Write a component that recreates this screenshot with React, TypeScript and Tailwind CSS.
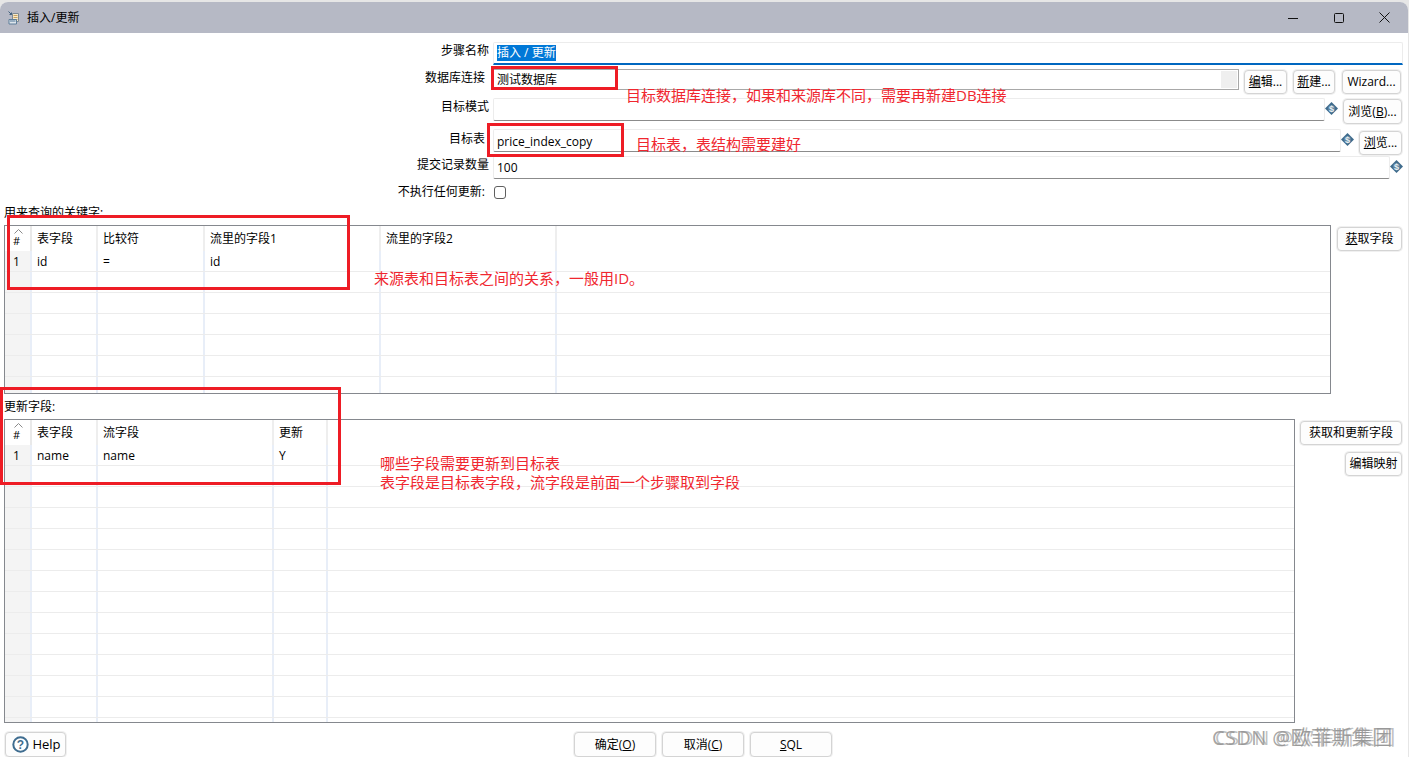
import type { ReactNode } from "react";

const cjk = "font-['Open_Sans','Noto_Sans_CJK_SC',sans-serif]";

function Btn({ children, className = "" }: { children: ReactNode; className?: string }) {
  return (
    <button className={`flex items-center justify-center rounded-[4px] border border-[#d4d4d4] bg-[#fdfdfd] text-[12px] leading-none text-black shadow-[0_0_0_1px_#f0f0f0] ${className}`}>
      {children}
    </button>
  );
}

function VarIcon() {
  return (
    <svg width="13" height="13" viewBox="0 0 13 13" className="shrink-0">
      <path d="M6.500 0 13 6.500 6.500 13 0 6.500Z" fill="#3f6b8c" />
      <circle cx="6.500" cy="6.500" r="3.600" fill="#5f84a0" />
      <text x="6.500" y="9.500" textAnchor="middle" fontSize="9" fontWeight="700" fill="#e8eef3" fontFamily="Liberation Sans">$</text>
    </svg>
  );
}

function Label({ children, className = "w-[489px]" }: { children: ReactNode; className?: string }) {
  return <div className={`shrink-0 text-right text-[12px] leading-[16px] text-black ${className}`}>{children}</div>;
}

function Field({ children, className = "" }: { children?: ReactNode; className?: string }) {
  return (
    <div className={`flex h-[23px] items-center rounded-[2px] border border-[#ececec] border-b-[#8b8b8b] bg-white pl-[3px] text-[12px] text-black ${className}`}>
      {children}
    </div>
  );
}

type Col = { title: string; width: string };

function Grid({ cols, rows, height, width }: { cols: Col[]; rows: string[]; height: string; width: string }) {
  const emptyRows = Array.from({ length: 14 });
  return (
    <div className={`${height} ${width} overflow-hidden border border-[#85888e] bg-white text-[12px] text-black`}>
      <div className="flex h-[25px]">
        <div className="relative flex w-[27px] shrink-0 items-end justify-center border-r-2 border-[#e9e9e9] pb-[5px] pr-[2px] text-[11px] leading-none">
          <svg width="9" height="5" viewBox="0 0 9 5" className="absolute left-[9px] top-[3px]">
            <path d="M.5 4.500 4.500.5l4 4" fill="none" stroke="#8a8a8a" />
          </svg>
          #
        </div>
        {cols.map((c) => (
          <div key={c.title} className={`${c.width} flex shrink-0 items-center border-r-2 border-[#eeeeee] pl-[5px] pt-[1px]`}>
            {c.title}
          </div>
        ))}
      </div>
      <div className="flex h-[21px] border-b border-[#ececec]">
        <div className="flex w-[27px] shrink-0 items-center border-r-2 border-[#e8eef8] bg-[#f4f4f4] pl-[8px] pt-[1px]">1</div>
        {cols.map((c, i) => (
          <div key={c.title} className={`${c.width} flex shrink-0 items-center border-r-2 border-[#e8eef8] pl-[5px] pt-[1px]`}>
            {rows[i]}
          </div>
        ))}
      </div>
      {emptyRows.map((_, r) => (
        <div key={r} className="flex h-[21px] border-b border-[#ececec]">
          <div className="w-[27px] shrink-0 border-r-2 border-[#e8eef8] bg-[#f4f4f4]" />
          {cols.map((c) => (
            <div key={c.title} className={`${c.width} shrink-0 border-r-2 border-[#e8eef8]`} />
          ))}
        </div>
      ))}
    </div>
  );
}

function Note({ children, className }: { children: ReactNode; className: string }) {
  return <div className={`absolute text-[15px] leading-[19px] whitespace-nowrap text-[#f0272f] ${className}`}>{children}</div>;
}

function RedBox({ className }: { className: string }) {
  return <div className={`absolute border-[3px] border-[#ee1c25] ${className}`} />;
}

export default function App() {
  return (
    <div className={`relative h-[757px] w-[1409px] overflow-hidden bg-[#e6e6e6] pt-[2px] ${cjk}`}>
      <div className="h-[755px] w-[1408px] overflow-hidden rounded-t-[8px] bg-white">
        {/* title bar */}
        <div className="flex h-[31px] items-center bg-[#b6b9c5] pl-[8px] pr-[18px]">
          <svg width="12" height="14" viewBox="0 0 12 14" className="shrink-0">
            <path d="M4.500 2.500h6v8h-6z" fill="#f6e9c9" stroke="#7f8a94" />
            <path d="M5.500 4.500h4M5.500 6.500h4M5.500 8.500h4" stroke="#c9a25f" />
            <path d="M1 8.500h7.500v4.500H1z" fill="#dfe6ec" stroke="#5f7f9a" />
            <path d="M2 10h5.500" stroke="#4f7596" />
            <path d="M.5.500l3 3M3.500 1.500v2h-2" fill="none" stroke="#3f5f7c" />
          </svg>
          <span className="ml-[7px] text-[12px] text-black">插入/更新</span>
          <div className="ml-auto flex items-center">
            <svg width="10" height="10" viewBox="0 0 10 10"><path d="M0 5.500h10" stroke="#111" /></svg>
            <svg width="10" height="10" viewBox="0 0 10 10" className="ml-[36px]"><rect x=".5" y=".5" width="9" height="9" rx="1" fill="none" stroke="#111" /></svg>
            <svg width="11" height="11" viewBox="0 0 11 11" className="ml-[35px]"><path d="M.5.5l10 10M10.500.5l-10 10" stroke="#111" /></svg>
          </div>
        </div>

        {/* form */}
        <div className="mt-[9px] flex h-[23px]">
          <Label className="w-[489px] pt-[1px]">步骤名称</Label>
          <div className="ml-[4px] flex h-[23px] w-[910px] items-start rounded-t-[2px] border border-[#ececec] border-b-2 border-b-[#0067c0] pl-[3px] pt-[2px] text-[12px] leading-[16px]">
            <span className="bg-[#0078d7] text-white">插入 / 更新</span>
          </div>
        </div>
        <div className="mt-[4px] flex h-[25px]">
          <Label className="w-[485px] pt-[1px]">数据库连接</Label>
          <div className="ml-[7px] flex h-[21px] w-[747px] items-center justify-between border border-[#a8a8a8] pl-[4px] pr-[1px] text-[12px]">
            测试数据库
            <div className="h-[17px] w-[16px] bg-[#efefef]" />
          </div>
          <Btn className="ml-[5px] mt-[1px] h-[24px] w-[43px]"><span><u>编</u>辑...</span></Btn>
          <Btn className="ml-[6px] mt-[1px] h-[24px] w-[42px]"><span><u>新</u>建...</span></Btn>
          <Btn className="ml-[7px] mt-[1px] h-[24px] w-[59px]">Wizard...</Btn>
        </div>
        <div className="mt-[4px] flex h-[26px]">
          <Label className="w-[489px] pt-[1px]">目标模式</Label>
          <Field className="ml-[4px] w-[832px]" />
          <div className="mt-[4px]"><VarIcon /></div>
          <Btn className="ml-[5px] mt-[1px] h-[25px] w-[59px]"><span>浏览(<u>B</u>)...</span></Btn>
        </div>
        <div className="mt-[5px] flex h-[26px]">
          <Label className="w-[485px] pt-[2px]">目标表</Label>
          <Field className="ml-[8px] w-[848px] pt-[2px]">price_index_copy</Field>
          <div className="mt-[4px]"><VarIcon /></div>
          <Btn className="ml-[5px] mt-[2px] h-[24px] w-[43px]"><span><u>浏</u>览...</span></Btn>
        </div>
        <div className="mt-px flex h-[23px]">
          <Label className="w-[489px] pt-[1px]">提交记录数量</Label>
          <Field className="ml-[4px] w-[897px]">100</Field>
          <div className="mt-[4px]"><VarIcon /></div>
        </div>
        <div className="mt-[5px] flex h-[16px] items-center">
          <Label className="w-[485px]">不执行任何更新:</Label>
          <input type="checkbox" className="ml-[9px] h-[13px] w-[12px] appearance-none rounded-[3px] border border-[#5f5f5f] bg-white" />
        </div>

        <div className="ml-[4px] mt-[5px] h-[20px] text-[12px] leading-[16px] text-black">用来查询的关键字:</div>

        <div className="flex items-start">
          <div className="ml-[4px]">
            <Grid
              height="h-[169px]"
              width="w-[1327px]"
              cols={[
                { title: "表字段", width: "w-[66px]" },
                { title: "比较符", width: "w-[107px]" },
                { title: "流里的字段1", width: "w-[176px]" },
                { title: "流里的字段2", width: "w-[176px]" },
              ]}
              rows={["id", "=", "id", ""]}
            />
          </div>
          <Btn className="ml-[6px] mt-[2px] h-[24px] w-[65px]"><span><u>获</u>取字段</span></Btn>
        </div>

        <div className="ml-[4px] mt-[5px] h-[20px] text-[12px] leading-[16px] text-black">更新字段:</div>

        <div className="flex items-start">
          <div className="ml-[4px]">
            <Grid
              height="h-[304px]"
              width="w-[1291px]"
              cols={[
                { title: "表字段", width: "w-[66px]" },
                { title: "流字段", width: "w-[176px]" },
                { title: "更新", width: "w-[54px]" },
              ]}
              rows={["name", "name", "Y"]}
            />
          </div>
          <div className="ml-[5px] flex w-[102px] flex-col items-end pt-[2px]">
            <Btn className="h-[24px] w-[102px]">获取和更新字段</Btn>
            <Btn className="mt-[7px] h-[24px] w-[57px]">编辑映射</Btn>
          </div>
        </div>

        {/* bottom buttons */}
        <div className="relative mt-[9px] flex h-[25px] justify-center pr-[2px]">
          <Btn className="absolute left-[5px] top-0 h-[25px] w-[61px] pl-[2px]">
            <svg width="17" height="17" viewBox="0 0 17 17" className="mr-[3px]">
              <circle cx="8.500" cy="8.500" r="7.200" fill="#fff" stroke="#3f6d90" strokeWidth="2" />
              <text x="8.500" y="12.800" textAnchor="middle" fontSize="12" fontWeight="700" fill="#3f6d90" fontFamily="Liberation Sans">?</text>
            </svg>
            <span className="text-[13px]">Help</span>
          </Btn>
          <Btn className="h-[25px] w-[82px]"><span>确定(<u>O</u>)</span></Btn>
          <Btn className="ml-[6px] h-[25px] w-[82px]"><span>取消(<u>C</u>)</span></Btn>
          <Btn className="ml-[6px] h-[25px] w-[82px]"><span><u>S</u>QL</span></Btn>
        </div>
      </div>

      {/* annotations drawn on top of the screenshot */}
      <RedBox className="left-[491px] top-[66px] h-[24px] w-[127px]" />
      <RedBox className="left-[487px] top-[123px] h-[34px] w-[137px]" />
      <RedBox className="left-[7px] top-[215px] h-[75px] w-[343px]" />
      <RedBox className="left-0 top-[387px] h-[98px] w-[341px]" />
      <Note className="left-[626px] top-[86px]">目标数据库连接，如果和来源库不同，需要再新建DB连接</Note>
      <Note className="left-[636px] top-[135px]">目标表，表结构需要建好</Note>
      <Note className="left-[374px] top-[269px]">来源表和目标表之间的关系，一般用ID。</Note>
      <Note className="left-[380px] top-[454px]">哪些字段需要更新到目标表</Note>
      <Note className="left-[380px] top-[473px]">表字段是目标表字段，流字段是前面一个步骤取到字段</Note>

      <div className="absolute left-[1212px] top-[727px] text-[20px] leading-[22px] tracking-[0.4px] whitespace-nowrap text-[#8d8d8d]/80 [text-shadow:3px_0_0_rgba(150,150,150,0.6)]">
        CSDN @欧菲斯集团
      </div>
    </div>
  );
}
